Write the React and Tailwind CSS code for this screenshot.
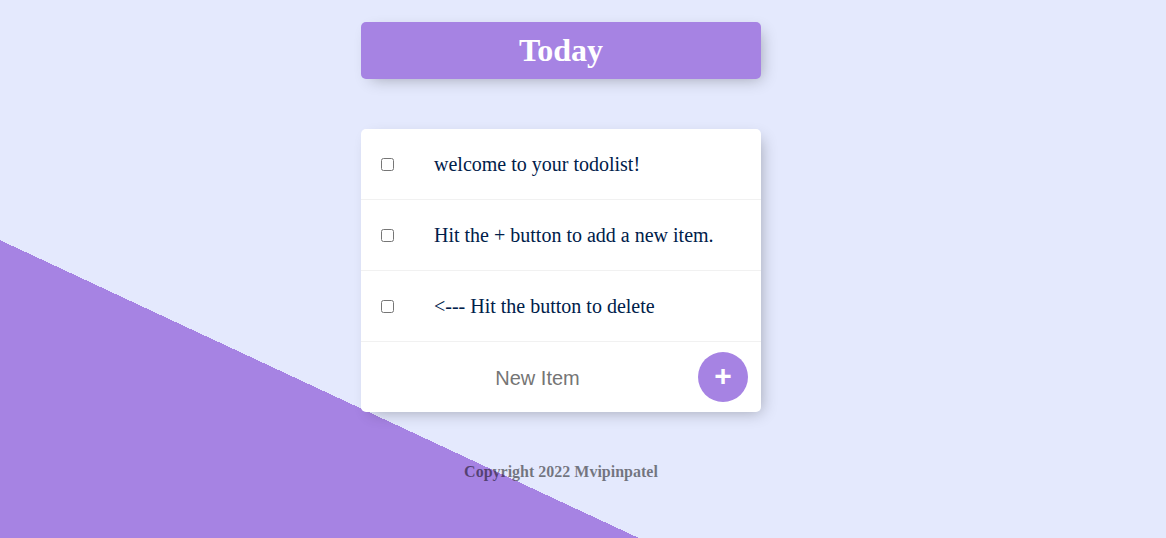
import { useState } from 'react';

const items = [
  'welcome to your todolist!',
  'Hit the + button to add a new item.',
  '<--- Hit the button to delete',
];

export default function App() {
  const [text, setText] = useState('');

  return (
    <div className="min-h-[1024px] bg-[#E4E9FD] bg-[linear-gradient(25deg,#A683E3_50%,#E4E9FD_50%)] pt-[22px] pr-[44px] font-['Liberation_Serif',serif]">
      {/* Heading */}
      <div className="mx-auto w-[400px] rounded-[5px] bg-[#A683E3] shadow-[5px_5px_15px_-5px_rgba(0,0,0,0.3)]">
        <h1 className="py-[10px] text-center text-[32px] leading-[37px] font-bold text-white">Today</h1>
      </div>

      {/* List */}
      <div className="mx-auto mt-[50px] w-[400px] rounded-[5px] bg-white shadow-[5px_5px_15px_-5px_rgba(0,0,0,0.3)]">
        {items.map(item => (
          <div key={item} className="flex min-h-[70px] items-center border-b border-[#F1F1F1]">
            <input type="checkbox" className="mx-[20px] h-[13px] w-[13px]" />
            <p className="p-[20px] text-[20px] text-[#00204a]">{item}</p>
          </div>
        ))}
        <form className="ml-[20px] flex h-[70px] items-center" onSubmit={e => e.preventDefault()}>
          <input
            type="text"
            value={text}
            onChange={e => setText(e.target.value)}
            placeholder="New Item"
            className="mt-[2px] h-[60px] w-[313px] bg-transparent text-center font-['Liberation_Sans',Arial,sans-serif] text-[20px] text-[#00204a] outline-none placeholder:text-[#757575]"
          />
          <button
            type="submit"
            className="ml-[4px] flex h-[50px] w-[50px] items-center justify-center rounded-full bg-[#A683E3] pb-[4px] font-['Liberation_Sans',Arial,sans-serif] text-[30px] font-bold text-white"
          >
            +
          </button>
        </form>
      </div>

      {/* Footer */}
      <footer className="mt-[48px] text-center text-[16px] font-bold text-black/50">Copyright 2022 Mvipinpatel</footer>
    </div>
  );
}
